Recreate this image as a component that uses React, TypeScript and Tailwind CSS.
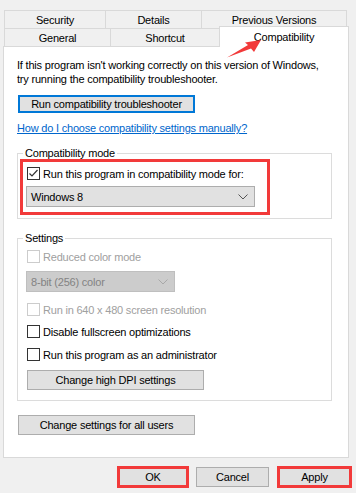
import React from 'react';

const Checkbox: React.FC<{ checked?: boolean; disabled?: boolean; label: string }> = ({ checked, disabled, label }) => (
  <div className="flex items-center gap-[3px] h-[13px]">
    <span
      className={`w-[13px] h-[13px] border bg-white flex items-center justify-center shrink-0 ${
        disabled ? 'border-[#cccccc]' : 'border-[#333333]'
      }`}
    >
      {checked && (
        <svg width="11" height="11" viewBox="0 0 11 11">
          <path d="M1.5 5.5 L4 8 L9.5 2" fill="none" stroke="#333333" strokeWidth="1.2" />
        </svg>
      )}
    </span>
    <span className={`whitespace-nowrap ${disabled ? 'text-[#a0a0a0]' : 'text-black'}`}>{label}</span>
  </div>
);

const Chevron: React.FC<{ color: string }> = ({ color }) => (
  <svg width="10" height="6" viewBox="0 0 10 6">
    <path d="M0.5 0.5 L5 5 L9.5 0.5" fill="none" stroke={color} strokeWidth="1" />
  </svg>
);

const App: React.FC = () => {
  return (
    <div
      className="relative w-[356px] h-[493px] bg-[#f0f0f0] overflow-hidden text-[11px] tracking-[-0.2px] leading-[14px] text-black whitespace-nowrap"
      style={{ fontFamily: '"Liberation Sans", Arial, sans-serif' }}
    >
      {/* tabs */}
      <div className="pt-[10px] pl-[4px]">
        <div className="flex h-[18px]">
          <div className="w-[101px] border-t border-l border-[#d9d9d9] flex items-center justify-center">Security</div>
          <div className="w-[96px] border-t border-l border-[#d9d9d9] flex items-center justify-center">Details</div>
          <div className="w-[146px] border-t border-l border-r border-[#d9d9d9] flex items-center justify-center">Previous Versions</div>
        </div>
        <div className="flex items-end h-[18px]">
          <div className="w-[106px] h-[18px] border-t border-l border-[#d9d9d9] flex items-center justify-center">General</div>
          <div className="w-[109px] h-[18px] border-t border-l border-[#d9d9d9] flex items-center justify-center">Shortcut</div>
          <div className="relative z-10 w-[130px] h-[21px] mb-[-1px] bg-white border-t border-l border-r border-[#d9d9d9] flex items-start justify-center pt-[3px]">
            Compatibility
          </div>
        </div>
      </div>

      {/* panel */}
      <div className="ml-[3px] w-[346px] h-[412px] bg-white border border-[#d9d9d9] pl-[13px] pt-[11px]">
        <p>
          If this program isn't working correctly on this version of Windows,
          <br />
          try running the compatibility troubleshooter.
        </p>
        <button className="mt-[9px] ml-[1px] w-[177px] h-[18px] bg-[#e1e1e1] border-2 border-[#0078d7] flex items-center justify-center">
          Run compatibility troubleshooter
        </button>
        <div className="mt-[8px] text-[#0066cc] underline">How do I choose compatibility settings manually?</div>

        <fieldset className="mt-[11px] w-[315px] border border-[#dcdcdc] pb-[3px]">
          <legend className="ml-[5px] px-[2px]">Compatibility mode</legend>
          <div className="-mt-[1px] ml-[2px] w-[250px] border-[3px] border-[#f23a3a] pt-[5px] pl-[4px] pb-[5px]">
            <Checkbox checked label="Run this program in compatibility mode for:" />
            <div className="mt-[6px] -ml-[1px] w-[229px] h-[21px] bg-[#e1e1e1] border border-[#adadad] flex items-center justify-between pl-[4px] pr-[6px]">
              <span>Windows 8</span>
              <Chevron color="#555555" />
            </div>
          </div>
        </fieldset>

        <fieldset className="mt-[12px] w-[315px] border border-[#dcdcdc] pl-[9px] pb-[10px]">
          <legend className="-ml-[4px] px-[2px]">Settings</legend>
          <div className="mt-[5px]">
            <Checkbox disabled label="Reduced color mode" />
          </div>
          <div className="mt-[8px] -ml-[1px] w-[149px] h-[21px] bg-[#cccccc] border border-[#bfbfbf] flex items-center justify-between pl-[4px] pr-[6px] text-[#838383]">
            <span>8-bit (256) color</span>
            <Chevron color="#a8a8a8" />
          </div>
          <div className="mt-[11px]">
            <Checkbox disabled label="Run in 640 x 480 screen resolution" />
          </div>
          <div className="mt-[9px]">
            <Checkbox label="Disable fullscreen optimizations" />
          </div>
          <div className="mt-[10px]">
            <Checkbox label="Run this program as an administrator" />
          </div>
          <button className="mt-[9px] w-[177px] h-[20px] bg-[#e1e1e1] border border-[#adadad] flex items-center justify-center">
            Change high DPI settings
          </button>
        </fieldset>

        <button className="mt-[14px] ml-[1px] w-[177px] h-[20px] bg-[#e1e1e1] border border-[#adadad] flex items-center justify-center">
          Change settings for all users
        </button>
      </div>

      {/* dialog buttons */}
      <div className="flex items-start mt-[8px]">
        <button className="ml-[117px] w-[72px] h-[22px] bg-[#e1e1e1] border-[3px] border-[#f23a3a] flex items-center justify-center">
          OK
        </button>
        <button className="ml-[7px] mt-[1px] w-[73px] h-[20px] bg-[#e1e1e1] border border-[#adadad] flex items-center justify-center">
          Cancel
        </button>
        <button className="ml-[8px] w-[75px] h-[22px] bg-[#e1e1e1] border-[3px] border-[#f23a3a] flex items-center justify-center">
          Apply
        </button>
      </div>

      {/* red annotation arrow */}
      <svg className="absolute left-0 top-0 z-20 pointer-events-none" width="356" height="80" viewBox="0 0 356 80">
        <polygon points="227,57.5 248,45 245,42.5 261,40 254,52 251,48.5" fill="#f23a3a" />
      </svg>
    </div>
  );
};

export default App;
